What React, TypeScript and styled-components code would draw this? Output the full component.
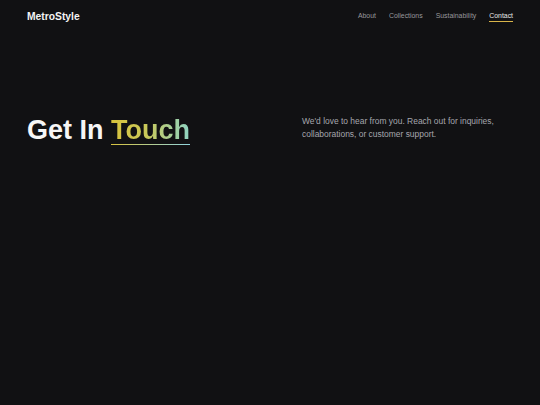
import { FC } from "react"
import styled, { createGlobalStyle } from "styled-components"

const GlobalStyle = createGlobalStyle`
  html, body {
    margin: 0;
    padding: 0;
    background: #111113;
  }
  body {
    font-family: "Liberation Sans", Arial, sans-serif;
    color: #f2f2f2;
  }
`

const Page = styled.div`
  min-height: 405px;
  background: #111113;
`

const Header = styled.header`
  display: flex;
  justify-content: space-between;
  align-items: center;
  height: 33px;
  padding: 0 27px;
`

const Logo = styled.div`
  font-size: 10.3px;
  font-weight: 700;
  color: #f4f4f4;
`

const Nav = styled.nav`
  display: flex;
  gap: 13px;
`

const NavLink = styled.a<{ $active?: boolean }>`
  font-size: 6.9px;
  color: ${(p) => (p.$active ? "#e8e8e8" : "#98989c")};
  text-decoration: none;
  padding-bottom: 2px;
  border-bottom: 1px solid ${(p) => (p.$active ? "#d9b54a" : "transparent")};
`

const Hero = styled.section`
  display: grid;
  grid-template-columns: 1fr 1fr;
  gap: 64px;
  align-items: center;
  padding: 82px 27px 0;
`

const Title = styled.h1`
  margin: 0;
  font-size: 27px;
  font-weight: 700;
  line-height: 1.15;
  color: #f6f6f6;
`

const Accent = styled.span`
  display: inline-block;
  background: linear-gradient(90deg, #d8c23c 0%, #c9c95a 45%, #8fd4c4 100%);
  -webkit-background-clip: text;
  background-clip: text;
  color: transparent;
  line-height: 1;
  padding-bottom: 0;
  border-bottom: 1.5px solid transparent;
  border-image: linear-gradient(90deg, #d8c23c, #8fd4e0) 1;
`

const Lead = styled.p`
  margin: 0 0 6px;
  font-size: 8.45px;
  line-height: 13px;
  color: #a6a6ad;
`

const App: FC = () => {
  return (
    <Page>
      <GlobalStyle />
      <Header>
        <Logo>MetroStyle</Logo>
        <Nav>
          <NavLink>About</NavLink>
          <NavLink>Collections</NavLink>
          <NavLink>Sustainability</NavLink>
          <NavLink $active>Contact</NavLink>
        </Nav>
      </Header>
      <Hero>
        <Title>
          Get In <Accent>Touch</Accent>
        </Title>
        <Lead>
          We'd love to hear from you. Reach out for inquiries,
          <br />
          collaborations, or customer support.
        </Lead>
      </Hero>
    </Page>
  )
}

export default App
